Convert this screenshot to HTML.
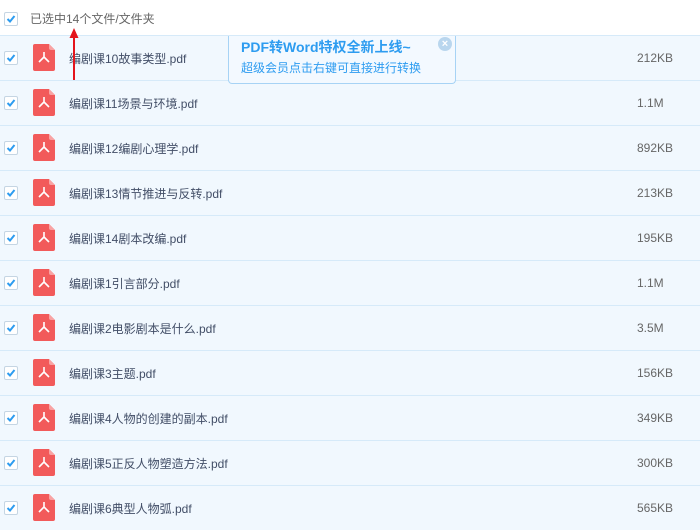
<!DOCTYPE html>
<html><head><meta charset="utf-8"><style>
body{margin:0;width:700px;height:511px;overflow:hidden;background:#fff;font-family:"Liberation Sans","Noto Sans CJK SC",sans-serif;position:relative}
.hdr{position:absolute;left:0;top:0;width:700px;height:35px}
.cb{position:absolute;width:12px;height:12px;border:1px solid #c5d5e3;background:#fff;border-radius:2px}
.cb svg{position:absolute;left:1px;top:1px}
.row{position:absolute;left:0;width:700px;height:44px;background:#f1f8fe;border-top:1px solid #d6eaf9}
.name{position:absolute;left:69px;top:15px;font-size:12px;line-height:16px;color:#424e67}
.size{position:absolute;left:637px;top:14px;font-size:12px;line-height:16px;color:#666}
.ico{position:absolute;left:33px;top:8px}
.tip{position:absolute;left:228px;top:36px;width:226px;height:47px;background:#f3f9ff;border:1px solid #a7d3f5;border-top:none;border-radius:0 0 4px 4px}
</style></head><body>
<div class="hdr">
<div class="cb" style="left:4px;top:12px"><svg width="10" height="10" viewBox="0 0 10 10"><path d="M1.5 5l2.5 2.5L8.5 2" stroke="#2d9cf0" stroke-width="2" fill="none"/></svg></div>
<div style="position:absolute;left:30px;top:11px;font-size:12px;line-height:16px;color:#666">已选中14个文件/文件夹</div>
</div>
<div id="rows"></div>
<script>
var d=[["编剧课10故事类型.pdf","212KB"],["编剧课11场景与环境.pdf","1.1M"],["编剧课12编剧心理学.pdf","892KB"],["编剧课13情节推进与反转.pdf","213KB"],["编剧课14剧本改编.pdf","195KB"],["编剧课1引言部分.pdf","1.1M"],["编剧课2电影剧本是什么.pdf","3.5M"],["编剧课3主题.pdf","156KB"],["编剧课4人物的创建的副本.pdf","349KB"],["编剧课5正反人物塑造方法.pdf","300KB"],["编剧课6典型人物弧.pdf","565KB"]];
var h="";d.forEach(function(r,i){h+='<div class="row" style="top:'+(35+45*i)+'px"><div class="cb" style="left:4px;top:15px"><svg width="10" height="10" viewBox="0 0 10 10"><path d="M1.5 5l2.5 2.5L8.5 2" stroke="#2d9cf0" stroke-width="2" fill="none"/></svg></div><svg class="ico" width="22" height="27" viewBox="0 0 22 27"><path d="M2 0h14l6 6v19a2 2 0 0 1-2 2H2a2 2 0 0 1-2-2V2a2 2 0 0 1 2-2z" fill="#f25a5a"/><path d="M16 0v4a2 2 0 0 0 2 2h4z" fill="#f9a3a3"/><path d="M11 8v5M11 13l-5 5M11 13l5 5" stroke="#fff" stroke-width="1.6" fill="none"/></svg><div class="name">'+r[0]+'</div><div class="size">'+r[1]+'</div></div>'});
document.getElementById("rows").innerHTML=h;
</script>
<div class="tip">
<div style="position:absolute;left:12px;top:2px;font-size:14px;line-height:18px;font-weight:bold;color:#2d9cf0">PDF转Word特权全新上线~</div>
<div style="position:absolute;left:12px;top:24px;font-size:12px;line-height:16px;color:#2d9cf0">超级会员点击右键可直接进行转换</div>
<div style="position:absolute;left:209px;top:1px;width:14px;height:14px;border-radius:50%;background:#b9d6ee;color:#fff;font-size:11px;line-height:14px;text-align:center;font-weight:bold">×</div>
</div>
<svg style="position:absolute;left:68px;top:26px" width="12" height="56"><path d="M6 2L1.5 12h9z" fill="#e4141b"/><path d="M6 10v44" stroke="#e4141b" stroke-width="2"/></svg>
</body></html>
